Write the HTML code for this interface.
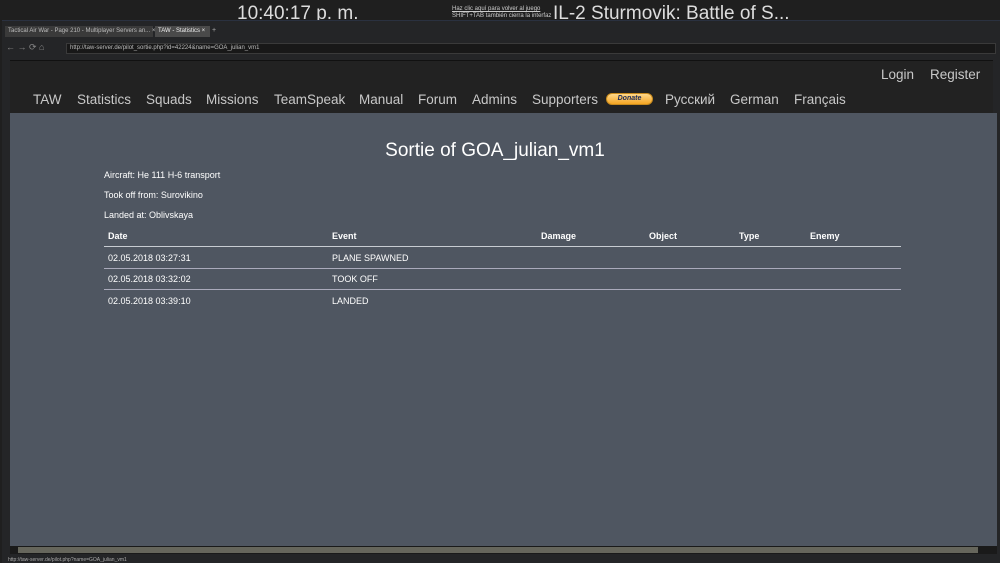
<!DOCTYPE html>
<html><head><meta charset="utf-8"><style>
*{margin:0;padding:0;box-sizing:border-box}
body{width:1000px;height:563px;overflow:hidden;background:#1f1f1f;font-family:"Liberation Sans",Arial,sans-serif;position:relative}
.abs{position:absolute}
.clock{left:237px;top:3px;font-size:19px;color:#ddd}
.game{left:553px;top:3px;font-size:19px;color:#ddd}
.hint{left:452px;top:6px;font-size:6px;color:#ccc;line-height:7px}
.frame{left:2px;top:20px;width:998px;height:543px;background:#242527;border-top:1px solid #2a3140}
.tab{top:26px;height:11px;font-size:6px;color:#bbb;background:#3a3a3a;padding:2px 3px;white-space:nowrap}
.addr{left:66px;top:43px;width:930px;height:11px;background:#181818;border:1px solid #3a3a3a;font-size:6px;color:#bbb;padding:1px 3px}
.hdr{left:10px;top:60px;width:983px;height:53px;background:#222;border-top:1px solid #111}
.nav{top:92px;font-size:13.5px;color:#c8c8c8}
.content{left:10px;top:113px;width:987px;height:433px;background:#4f5661}
h1{position:absolute;left:0;width:990px;top:140px;text-align:center;font-weight:normal;font-size:19px;color:#fff}
.t{font-size:9px;color:#fff}
.b{font-weight:bold}
.line{left:104px;width:797px;background:#c8ccd2}
</style></head><body>
<div class="abs clock">10:40:17 p. m.</div>
<div class="abs hint"><u>Haz clic aquí para volver al juego</u><br>SHIFT+TAB también cierra la interfaz</div>
<div class="abs game">IL-2 Sturmovik: Battle of S...</div>
<div class="abs frame"></div>
<div class="abs tab" style="left:5px;width:148px">Tactical Air War - Page 210 - Multiplayer Servers an... ×</div>
<div class="abs tab" style="left:155px;width:55px;background:#4a4a4a;color:#eee">TAW - Statistics ×</div>
<div class="abs" style="left:212px;top:27px;font-size:7px;color:#aaa">+</div>
<div class="abs" style="left:6px;top:42px;font-size:9px;color:#888">← → ⟳ ⌂</div>
<div class="abs addr">http://taw-server.de/pilot_sortie.php?id=42224&amp;name=GOA_julian_vm1</div>
<div class="abs hdr"></div>
<div class="abs nav" style="left:881px;top:67px">Login</div>
<div class="abs nav" style="left:930px;top:67px">Register</div>
<div class="abs nav" style="left:33px">TAW</div>
<div class="abs nav" style="left:77px">Statistics</div>
<div class="abs nav" style="left:146px">Squads</div>
<div class="abs nav" style="left:206px">Missions</div>
<div class="abs nav" style="left:274px">TeamSpeak</div>
<div class="abs nav" style="left:359px">Manual</div>
<div class="abs nav" style="left:418px">Forum</div>
<div class="abs nav" style="left:472px">Admins</div>
<div class="abs nav" style="left:532px">Supporters</div>
<div class="abs" style="left:606px;top:93px;width:47px;height:12px;border-radius:6px;background:linear-gradient(#ffd88a,#f5a623);border:1px solid #c88a1c;font-size:7px;font-style:italic;font-weight:bold;color:#1a2a5a;text-align:center;line-height:10px">Donate</div>
<div class="abs nav" style="left:665px">Русский</div>
<div class="abs nav" style="left:730px">German</div>
<div class="abs nav" style="left:794px">Français</div>
<div class="abs content"></div>
<h1>Sortie of GOA_julian_vm1</h1>
<div class="abs t" style="left:104px;top:170px">Aircraft: He 111 H-6 transport</div>
<div class="abs t" style="left:104px;top:190px">Took off from: Surovikino</div>
<div class="abs t" style="left:104px;top:210px">Landed at: Oblivskaya</div>
<div class="abs t b" style="left:108px;top:231px">Date</div>
<div class="abs t b" style="left:332px;top:231px">Event</div>
<div class="abs t b" style="left:541px;top:231px">Damage</div>
<div class="abs t b" style="left:649px;top:231px">Object</div>
<div class="abs t b" style="left:739px;top:231px">Type</div>
<div class="abs t b" style="left:810px;top:231px">Enemy</div>
<div class="abs line" style="top:246px;height:1px"></div>
<div class="abs t" style="left:108px;top:253px">02.05.2018 03:27:31</div>
<div class="abs t" style="left:332px;top:253px">PLANE SPAWNED</div>
<div class="abs line" style="top:268px;height:1px;background:#aab"></div>
<div class="abs t" style="left:108px;top:274px">02.05.2018 03:32:02</div>
<div class="abs t" style="left:332px;top:274px">TOOK OFF</div>
<div class="abs line" style="top:289px;height:1px;background:#aab"></div>
<div class="abs t" style="left:108px;top:296px">02.05.2018 03:39:10</div>
<div class="abs t" style="left:332px;top:296px">LANDED</div>
<div class="abs" style="left:10px;top:546px;width:987px;height:8px;background:#1a1a1a"></div>
<div class="abs" style="left:18px;top:547px;width:960px;height:6px;background:#66665c"></div>
<div class="abs" style="left:8px;top:557px;font-size:5px;color:#aaa">http://taw-server.de/pilot.php?name=GOA_julian_vm1</div>
</body></html>
